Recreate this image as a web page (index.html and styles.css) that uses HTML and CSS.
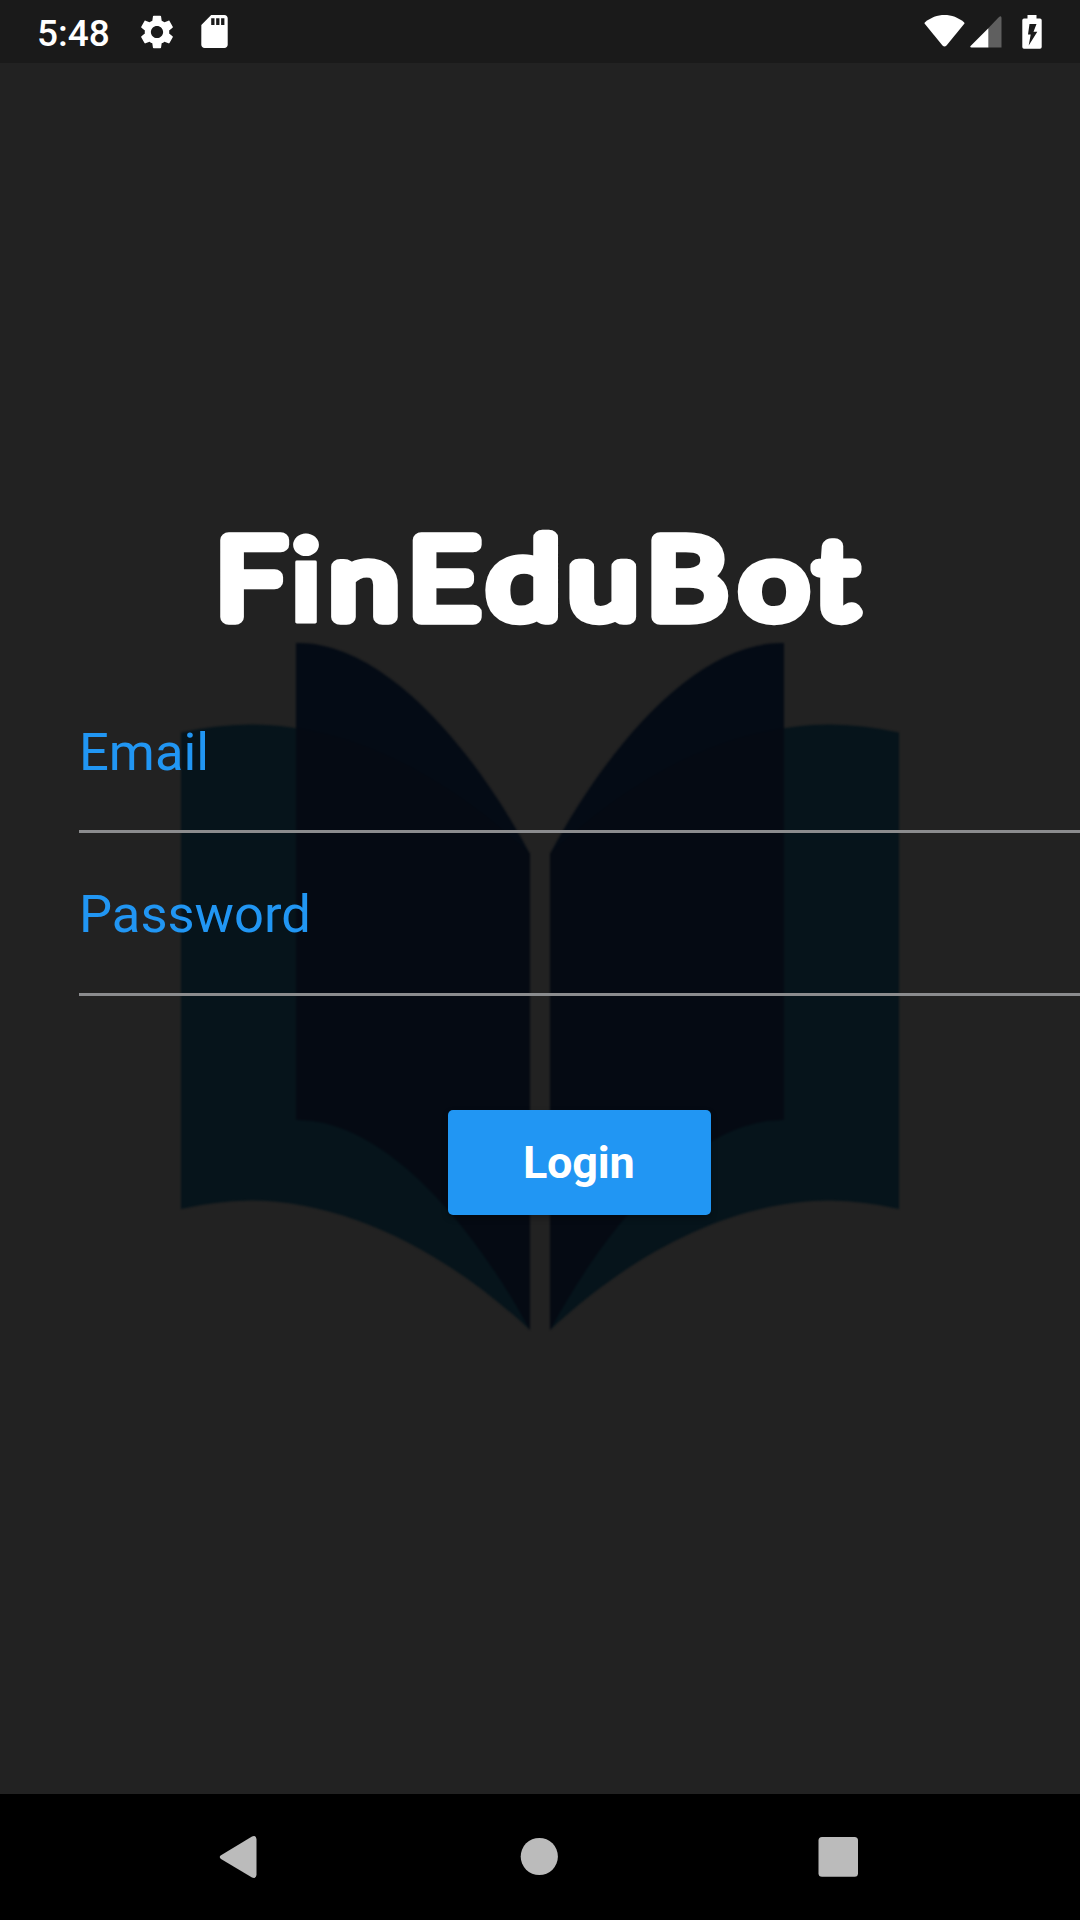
FILE: index.html
```html
<!DOCTYPE html>
<html lang="en">
<head>
<meta charset="utf-8">
<title>FinEduBot</title>
<link rel="stylesheet" href="styles.css">
</head>
<body>
<div class="screen">
  <header class="status">
    <span class="time">5:48</span>
    <svg class="gear" viewBox="2 2 20 20"><path d="M19.14 12.94c.04-.3.06-.61.06-.94 0-.32-.02-.64-.07-.94l2.03-1.58c.18-.14.23-.41.12-.61l-1.92-3.32c-.12-.22-.37-.29-.59-.22l-2.39.96c-.5-.38-1.03-.7-1.62-.94l-.36-2.54c-.04-.24-.24-.41-.48-.41h-3.84c-.24 0-.43.17-.47.41l-.36 2.54c-.59.24-1.13.57-1.62.94l-2.39-.96c-.22-.08-.47 0-.59.22L2.74 8.87c-.12.21-.08.47.12.61l2.03 1.58c-.05.3-.09.63-.09.94s.02.64.07.94l-2.03 1.58c-.18.14-.23.41-.12.61l1.92 3.32c.12.22.37.29.59.22l2.39-.96c.5.38 1.03.7 1.62.94l.36 2.54c.05.24.24.41.48.41h3.84c.24 0 .44-.17.47-.41l.36-2.54c.59-.24 1.13-.56 1.62-.94l2.39.96c.22.08.47 0 .59-.22l1.92-3.32c.12-.22.07-.47-.12-.61l-2.01-1.58zM12 15.6c-1.98 0-3.6-1.62-3.6-3.6s1.62-3.6 3.6-3.6 3.6 1.62 3.6 3.6-1.62 3.6-3.6 3.6z"/></svg>
    <svg class="sd" viewBox="4 2 16 20"><path d="M18 2h-8L4.02 8 4 20c0 1.1.9 2 2 2h12c1.1 0 2-.9 2-2V4c0-1.1-.9-2-2-2zm-6 6h-2V4h2v4zm3 0h-2V4h2v4zm3 0h-2V4h2v4z"/></svg>
    <svg class="wifi" viewBox="0 0 41 32"><path d="M20.500 31.500Q19.500 31.500 18.500 30.500L.7 8.800Q.2 8 1 7.200C6.500 2.600 13.500 0 20.500 0S34.500 2.600 40 7.200Q40.800 8 40.300 8.800L22.500 30.500Q21.500 31.500 20.500 31.500Z"/></svg>
    <svg class="signal" viewBox="0 0 32 32"><path class="dim" d="M18 12.500 29 1Q31.500-.8 31.500 2V31.500H18Z"/><path d="M18.300 12.200V31.500H1.500Q-.6 31.300.8 29.700Z"/></svg>
    <svg class="battery" viewBox="0 0 20 34"><path fill-rule="evenodd" d="M5.500 0H14.500V3.500H18Q19.700 3.500 19.700 5.200V32Q19.700 33.800 18 33.800H2Q.3 33.800.3 32V5.200Q.3 3.500 2 3.500H5.500ZM7.500 9 6 19.500H8.700L6.700 30.500 15.300 16.800H11.500L14.500 9Z"/></svg>
  </header>

  <main class="login">
    <svg class="book" viewBox="0 0 740 710">
      <g id="left-page">
        <path class="cover" d="M11 111.500Q45 104 80 103.500C170 103.500 270 149 360 233V709C270 625 170 579.500 80 579.500Q45 580 11 588Z"/>
        <path class="leaf" d="M126 22C210 20 300 120 360 233V709C300 597 210 497 126 499Z"/>
        <path class="fold" d="M126 107C220 121 300 177 360 233V709C300 597 210 497 126 499Z"/>
      </g>
      <use href="#left-page" transform="matrix(-1 0 0 1 740 0)"/>
    </svg>

    <svg class="brand" viewBox="0 0 680 120" role="img" aria-label="FinEduBot">
      <text transform="scale(1.12 1)" y="109.700"><tspan x="5.600">F</tspan><tspan class="dotted" x="70.500" y="115">i</tspan><tspan class="low" x="107.500" y="109.700" textLength="60" lengthAdjust="spacingAndGlyphs">n</tspan><tspan x="177.400">E</tspan><tspan x="248" textLength="64" lengthAdjust="spacingAndGlyphs">d</tspan><tspan class="low" x="321" textLength="60" lengthAdjust="spacingAndGlyphs">u</tspan><tspan x="390.500" textLength="71" lengthAdjust="spacingAndGlyphs">B</tspan><tspan class="low" x="474" textLength="59.500" lengthAdjust="spacingAndGlyphs">o</tspan><tspan class="tee" x="541">t</tspan></text>
    </svg>

    <form class="fields">
      <label class="field">Email</label>
      <label class="field">Password</label>
      <button class="submit" type="button">Login</button>
    </form>
  </main>

  <nav class="nav">
    <svg viewBox="0 0 44 44"><path d="M5 20.300 36 1.500Q40 0 40.500 4V40Q40 44 36 42.500L5 24Q2.500 22 5 20.300Z"/></svg>
    <svg viewBox="0 0 44 44"><circle cx="23.300" cy="21.500" r="18.600"/></svg>
    <svg viewBox="0 0 44 44"><rect x="2.500" y="2" width="39.500" height="39.800" rx="3.500"/></svg>
  </nav>
</div>
</body>
</html>
```
FILE: styles.css
```css
* { box-sizing: border-box; }
body { margin: 0; background: #222; font-family: Roboto, sans-serif; }
svg { display: block; flex: none; }
.screen { width: 1080px; height: 1920px; display: flex; flex-direction: column; overflow: hidden; background: #222; }

.status { height: 63px; flex: none; background: #1a1a1a; display: flex; align-items: center; padding: 0 38px 0 37px; }
.status svg { fill: #fff; }
.time { color: #fff; font-size: 37px; font-weight: 500; width: 103px; line-height: 42px; padding-top: 4px; }
.gear { width: 34px; height: 34px; }
.sd { width: 27px; height: 33px; margin-left: 27px; }
.wifi { width: 41px; height: 32px; margin-left: auto; margin-top: -2px; }
.signal { width: 32px; height: 32px; margin-left: 5px; }
.status .dim { fill: #5f5f5f; }
.battery { width: 20px; height: 34px; margin-left: 20px; }

.login { flex: 1; position: relative; padding: 444px 0 0 79px; }
.book { position: absolute; left: 170px; top: 557.500px; width: 740px; height: 710px; filter: blur(.8px); }
.cover { fill: #06141b; }
.leaf { fill: #040b15; }
.fold { fill: #050a13; }

.brand { position: relative; width: 680px; height: 120px; margin-left: 131px; overflow: visible; }
.brand text { font-family: Lato, sans-serif; font-weight: 300; font-size: 108.500px; fill: #fff; stroke: #fff; stroke-width: 15.500px; stroke-linejoin: round; stroke-linecap: round; }
.brand .low { font-size: 101px; }
.brand .tee { font-size: 104px; }
.brand .dotted { font-size: 117px; font-weight: 900; stroke-width: 3px; }

.fields { position: relative; display: flex; flex-direction: column; margin-top: 63px; }
.field { height: 162.500px; padding-top: 51px; border-bottom: 3px solid #8b8c8e; font-size: 52.500px; line-height: 60px; color: #2196f3; }
.field:first-child { height: 143px; padding-top: 32px; }
.submit { align-self: flex-start; width: 262.500px; height: 105px; margin: 114px 0 0 369px; padding: 0 1px 0 0; border: 0; border-radius: 5px; background: #2196f3; color: #fff; font: 700 45px/106px Roboto, sans-serif; letter-spacing: -.2px; box-shadow: 0 3px 6px rgba(0,0,0,.3); }

.nav { height: 126px; flex: none; background: #000; display: flex; align-items: center; justify-content: space-between; padding: 0 220px 0 216px; }
.nav svg { width: 44px; height: 44px; fill: #bbb; }
```
